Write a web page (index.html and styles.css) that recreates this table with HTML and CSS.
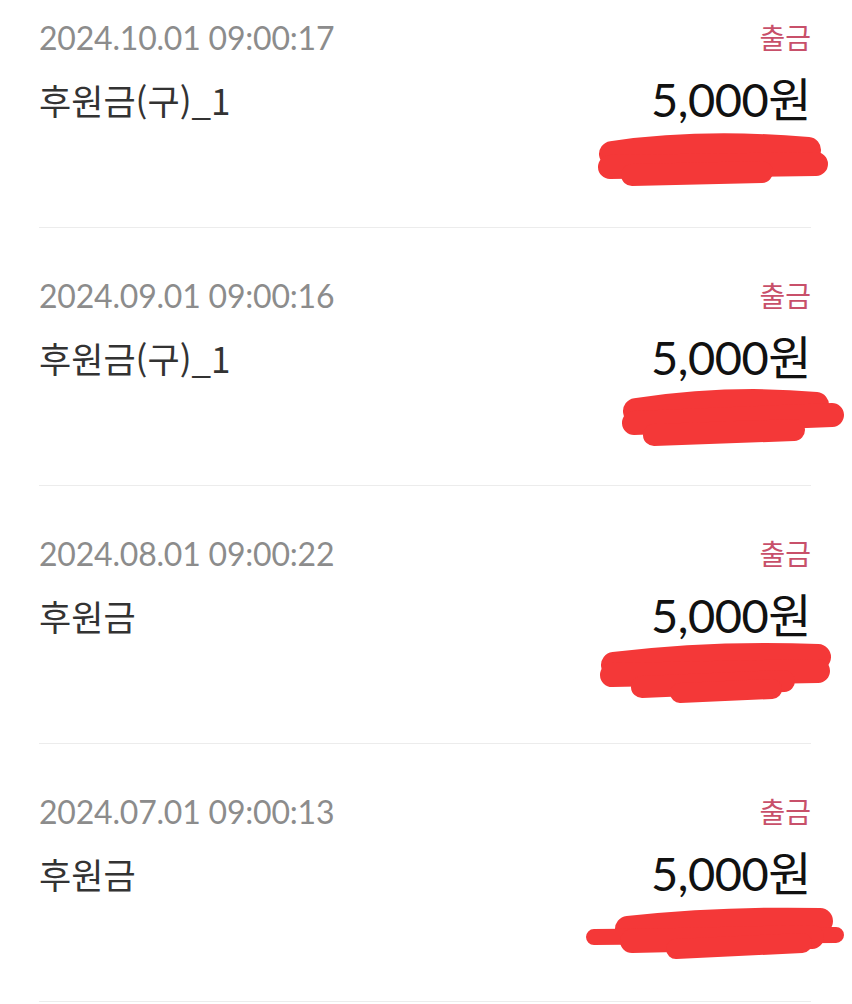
FILE: index.html
```html
<!DOCTYPE html>
<html lang="ko">
<head>
<meta charset="utf-8">
<title>후원금 내역</title>
<link rel="stylesheet" href="styles.css">
</head>
<body>
<ul class="list">
  <li class="row">
    <div class="line-top"><span class="date">2024.10.01 09:00:17</span><span class="type">출금</span></div>
    <div class="line-main"><span class="title">후원금(구)_1</span><span class="amount">5,000원</span></div>
    <svg class="scribble" viewBox="0 0 280 65" aria-hidden="true">
      <g fill="none" stroke="#f43838" stroke-linecap="round" stroke-linejoin="round">
        <path d="M40 29 Q130 16 236 25" stroke-width="26"/>
        <path d="M38 42 L244 39" stroke-width="24"/>
        <path d="M60 50 L190 47" stroke-width="22"/>
      </g>
    </svg>
  </li>
  <li class="row">
    <div class="line-top"><span class="date">2024.09.01 09:00:16</span><span class="type">출금</span></div>
    <div class="line-main"><span class="title">후원금(구)_1</span><span class="amount">5,000원</span></div>
    <svg class="scribble" viewBox="0 0 280 65" aria-hidden="true">
      <g fill="none" stroke="#f43838" stroke-linecap="round" stroke-linejoin="round">
        <path d="M64 28 Q160 14 244 22" stroke-width="26"/>
        <path d="M62 40 L260 32" stroke-width="24"/>
        <path d="M82 52 L222 47" stroke-width="22"/>
      </g>
    </svg>
  </li>
  <li class="row">
    <div class="line-top"><span class="date">2024.08.01 09:00:22</span><span class="type">출금</span></div>
    <div class="line-main"><span class="title">후원금</span><span class="amount">5,000원</span></div>
    <svg class="scribble" viewBox="0 0 280 65" aria-hidden="true">
      <g fill="none" stroke="#f43838" stroke-linecap="round" stroke-linejoin="round">
        <path d="M42 24 Q140 12 246 16" stroke-width="26"/>
        <path d="M40 34 L246 30" stroke-width="24"/>
        <path d="M70 46 L212 40" stroke-width="22"/>
        <path d="M108 52 L200 48" stroke-width="20"/>
      </g>
    </svg>
  </li>
  <li class="row">
    <div class="line-top"><span class="date">2024.07.01 09:00:13</span><span class="type">출금</span></div>
    <div class="line-main"><span class="title">후원금</span><span class="amount">5,000원</span></div>
    <svg class="scribble" viewBox="0 0 280 65" aria-hidden="true">
      <g fill="none" stroke="#f43838" stroke-linecap="round" stroke-linejoin="round">
        <path d="M56 30 Q150 20 248 22" stroke-width="26"/>
        <path d="M22 38 L264 36" stroke-width="16"/>
        <path d="M60 42 L240 38" stroke-width="24"/>
        <path d="M104 50 L230 44" stroke-width="20"/>
      </g>
    </svg>
  </li>
</ul>
</body>
</html>
```
FILE: styles.css
```css
html, body {
  margin: 0;
  padding: 0;
  background: #ffffff;
}

body {
  font-family: Lato, "Noto Sans CJK KR", sans-serif;
  overflow: hidden;
}

.list {
  list-style: none;
  margin: 0;
  padding: 0;
}

.row {
  box-sizing: border-box;
  height: 258px;
  margin: 0 41px 0 39px;
  padding-top: 43px;
  border-bottom: 1px solid #ececec;
  display: flex;
  flex-direction: column;
}

.row:first-child {
  height: 228px;
  padding-top: 13px;
}

.line-top {
  height: 48px;
  display: flex;
  align-items: center;
  justify-content: space-between;
}

.date {
  font-size: 32px;
  color: #8c8c8c;
  letter-spacing: -0.2px;
}

.type {
  font-size: 28px;
  color: #c8506a;
}

.line-main {
  height: 52px;
  margin-top: 12px;
  display: flex;
  align-items: center;
  justify-content: space-between;
}

.title {
  font-family: "Noto Sans CJK KR", sans-serif;
  font-size: 35px;
  color: #333333;
}

.amount {
  font-size: 47px;
  font-weight: 400;
  color: #111111;
  letter-spacing: -0.5px;
  margin-top: -6px;
}

.scribble {
  display: block;
  width: 280px;
  height: 65px;
  margin-left: auto;
  margin-right: -41px;
  overflow: visible;
}
```
